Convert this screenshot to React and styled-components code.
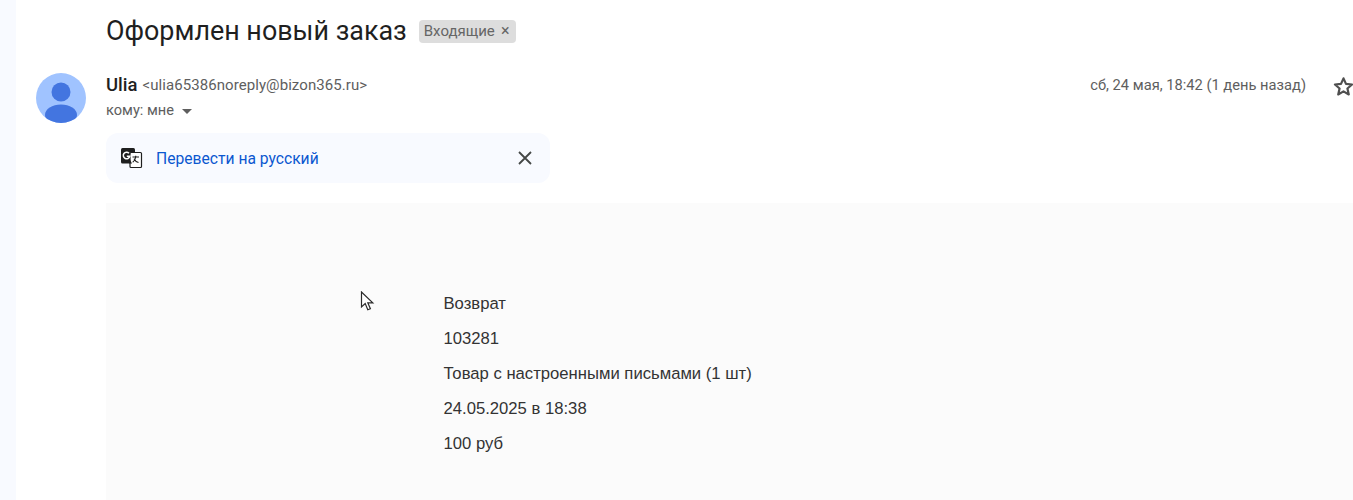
import React from 'react';
import styled, { createGlobalStyle } from 'styled-components';

const GlobalStyle = createGlobalStyle`
  html, body {
    margin: 0;
    padding: 0;
    height: 500px;
    overflow: hidden;
    background: #ffffff;
    font-family: Roboto, "Noto Sans", sans-serif;
  }
`;

const Page = styled.div`
  position: relative;
  display: flex;
  width: 1353px;
  height: 500px;
  overflow: hidden;
`;

const SideStrip = styled.div`
  width: 16px;
  flex-shrink: 0;
  background: #f8faff;
`;

const Mail = styled.div`
  flex: 1;
  display: flex;
  flex-direction: column;
  min-width: 0;
`;

const SubjectRow = styled.div`
  display: flex;
  align-items: center;
  height: 46px;
  padding: 8px 0 0 90px;
`;

const Subject = styled.h2`
  margin: 0;
  font-size: 26.9px;
  font-weight: 400;
  color: #1f1f1f;
  white-space: nowrap;
`;

const Label = styled.span`
  display: flex;
  align-items: center;
  gap: 5px;
  height: 23px;
  margin-left: 12px;
  padding: 0 5px;
  border-radius: 4px;
  background: #dddddd;
  font-size: 15px;
  color: #666666;
`;

const LabelClose = styled.span`
  width: 11px;
  font-size: 16px;
  line-height: 1;
  text-align: center;
`;

const SenderRow = styled.div`
  display: flex;
  padding: 19px 0 0 20px;
`;

const Avatar = styled.svg`
  width: 50px;
  height: 50px;
  flex-shrink: 0;
`;

const SenderInfo = styled.div`
  flex: 1;
  margin-left: 20px;
  min-width: 0;
`;

const SenderLine = styled.div`
  display: flex;
  align-items: center;
  height: 24px;
`;

const SenderName = styled.span`
  font-size: 18.5px;
  font-weight: 500;
  color: #1f1f1f;
`;

const SenderMail = styled.span`
  margin-left: 5px;
  font-size: 15px;
  letter-spacing: 0.07px;
  color: #5e5e5e;
`;

const DateText = styled.span`
  margin-left: auto;
  font-size: 14.7px;
  color: #5e5e5e;
  white-space: nowrap;
`;

const StarIcon = styled.svg`
  width: 23px;
  height: 23px;
  margin: 2px -2px 0 26px;
  flex-shrink: 0;
`;

const ToLine = styled.div`
  display: flex;
  align-items: center;
  height: 24px;
  margin-top: 1px;
  font-size: 14.6px;
  color: #5e5e5e;
`;

const Caret = styled.span`
  width: 0;
  height: 0;
  margin: 2px 0 0 8px;
  border-left: 5px solid transparent;
  border-right: 5px solid transparent;
  border-top: 5px solid #5e5e5e;
`;

const TranslateBar = styled.div`
  display: flex;
  align-items: center;
  width: 444px;
  height: 50px;
  margin: 10px 0 0 90px;
  padding: 0 15px;
  box-sizing: border-box;
  border-radius: 12px;
  background: #f8faff;
`;

const TranslateLink = styled.a`
  margin-left: 13px;
  font-size: 15.65px;
  font-weight: 400;
  color: #0b57d0;
  text-decoration: none;
`;

const CloseIcon = styled.svg`
  width: 14px;
  height: 14px;
  margin-left: auto;
  margin-right: 3px;
`;

const Body = styled.div`
  flex: 1;
  margin: 20px 0 0 90px;
  padding: 92px 0 0 337.500px;
  background: #fbfbfb;
  font-family: "Liberation Sans", Arial, sans-serif;
  font-size: 16.67px;
  color: #333333;
`;

const BodyLine = styled.div`
  height: 35px;
  line-height: 18px;
`;

const Cursor = styled.svg`
  position: absolute;
  left: 360px;
  top: 291px;
  width: 15px;
  height: 21px;
`;

const lines = [
  'Возврат',
  '103281',
  'Товар с настроенными письмами (1 шт)',
  '24.05.2025 в 18:38',
  '100 руб',
];

export default function App() {
  return (
    <Page>
      <GlobalStyle />
      <SideStrip />
      <Mail>
        <SubjectRow>
          <Subject>Оформлен новый заказ</Subject>
          <Label>
            Входящие
            <LabelClose>×</LabelClose>
          </Label>
        </SubjectRow>
        <SenderRow>
          <Avatar viewBox="0 0 50 50">
            <defs>
              <clipPath id="avatarClip">
                <circle cx="25" cy="25" r="25" />
              </clipPath>
            </defs>
            <circle cx="25" cy="25" r="25" fill="#a0c3ff" />
            <g clipPath="url(#avatarClip)" fill="#4375e0">
              <circle cx="25" cy="19" r="9.5" />
              <ellipse cx="25" cy="42" rx="16" ry="10.5" />
            </g>
          </Avatar>
          <SenderInfo>
            <SenderLine>
              <SenderName>Ulia</SenderName>
              <SenderMail>&lt;ulia65386noreply@bizon365.ru&gt;</SenderMail>
              <DateText>сб, 24 мая, 18:42 (1 день назад)</DateText>
              <StarIcon viewBox="0 0 24 24">
                <path
                  d="M12 3.500l2.600 5.800 6.300.6-4.800 4.200 1.400 6.200L12 17.100l-5.500 3.200 1.400-6.200-4.800-4.200 6.300-.6z"
                  fill="none"
                  stroke="#4f4f4f"
                  strokeWidth="2.300"
                  strokeLinejoin="round"
                />
              </StarIcon>
            </SenderLine>
            <ToLine>
              кому: мне
              <Caret />
            </ToLine>
          </SenderInfo>
        </SenderRow>
        <TranslateBar>
          <svg width="22" height="22" viewBox="0 0 22 22">
            <rect x="0" y="1" width="14" height="15.500" rx="1.500" fill="#1f1f1f" />
            <rect x="9" y="5.500" width="11.500" height="15" rx="1" fill="#ffffff" stroke="#1f1f1f" strokeWidth="1.200" />
            <path d="M8.600 12l2.400 4.500H8.500z" fill="#1f1f1f" />
            <path d="M8 6.200a3.300 3.300 0 1 0 .8 3.100H5.800" fill="none" stroke="#ffffff" strokeWidth="1.500" />
            <path d="M11.500 10h6.500M14.700 8.800V10c-.3 2.500-1.300 4.200-3 5.300M13 11.800c.8 1.700 2.300 3.100 4.500 3.700" fill="none" stroke="#1f1f1f" strokeWidth="1.100" />
          </svg>
          <TranslateLink>Перевести на русский</TranslateLink>
          <CloseIcon viewBox="0 0 14 14">
            <path d="M1 1l12 12M13 1L1 13" stroke="#444746" strokeWidth="1.800" />
          </CloseIcon>
        </TranslateBar>
        <Body>
          {lines.map((line) => (
            <BodyLine key={line}>{line}</BodyLine>
          ))}
        </Body>
      </Mail>
      <Cursor viewBox="0 0 15 21">
        <path
          d="M1.500 1v15l3.700-3.400 2.600 6.200 2.600-1.100-2.600-5.900h5z"
          fill="#ffffff"
          stroke="#2a2a2a"
          strokeWidth="1.200"
        />
      </Cursor>
    </Page>
  );
}
